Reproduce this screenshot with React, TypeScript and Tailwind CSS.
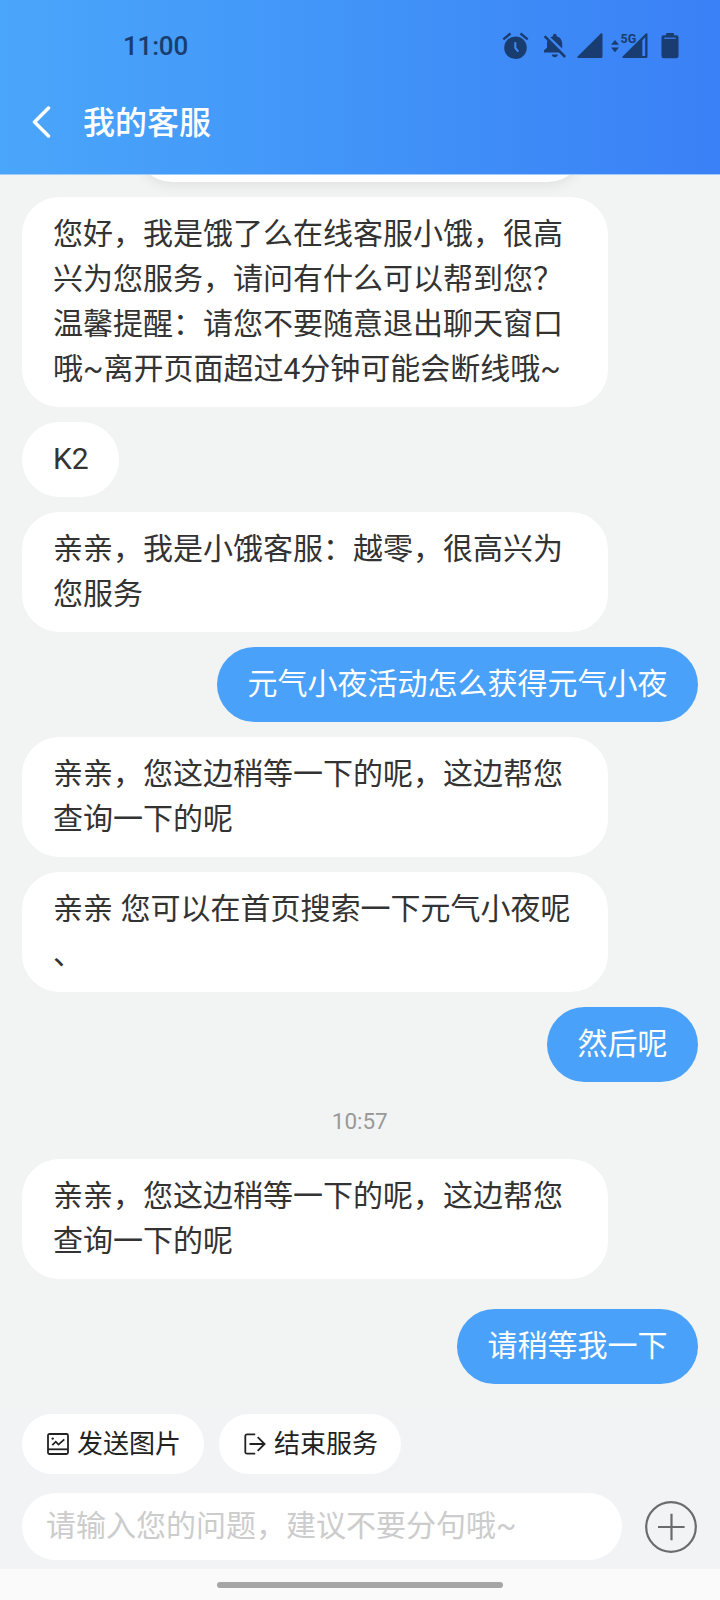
import { clsx } from 'clsx'

type Message = {
  id: number
  from: 'agent' | 'user' | 'time'
  text: string
  spaced?: boolean
}

const MESSAGES: Message[] = [
  {
    id: 1,
    from: 'agent',
    text: '您好，我是饿了么在线客服小饿，很高兴为您服务，请问有什么可以帮到您？\n温馨提醒：请您不要随意退出聊天窗口哦~离开页面超过4分钟可能会断线哦~',
  },
  { id: 2, from: 'agent', text: 'K2' },
  { id: 3, from: 'agent', text: '亲亲，我是小饿客服：越零，很高兴为您服务' },
  { id: 4, from: 'user', text: '元气小夜活动怎么获得元气小夜' },
  { id: 5, from: 'agent', text: '亲亲，您这边稍等一下的呢，这边帮您查询一下的呢' },
  { id: 6, from: 'agent', text: '亲亲 您可以在首页搜索一下元气小夜呢、' },
  { id: 7, from: 'user', text: '然后呢' },
  { id: 8, from: 'time', text: '10:57' },
  { id: 9, from: 'agent', text: '亲亲，您这边稍等一下的呢，这边帮您查询一下的呢' },
  { id: 10, from: 'user', text: '请稍等我一下', spaced: true },
]

function AlarmIcon() {
  return (
    <svg width="27" height="28" viewBox="0 0 27 28" fill="none">
      <circle cx="13.5" cy="15.7" r="11.3" fill="currentColor" />
      <path d="M1.300 7.400 8.500 1.500M25.700 7.400l-7.200-5.900" stroke="currentColor" strokeWidth="2.4" />
      <path d="M13.300 10.300v5.700l3 3.600" stroke="#3f8bf7" strokeWidth="2" />
    </svg>
  )
}

function BellOffIcon() {
  return (
    <svg width="24" height="26" viewBox="0 0 24 26" fill="none">
      <path
        d="M7.400 4.300c.7-.5 1.600-.8 2.600-1V2.600a1.800 1.800 0 0 1 3.600 0v.7c3.500.8 5.600 3.800 5.600 7.500v4.700z"
        fill="currentColor"
      />
      <path d="M4.500 7.600 17 19.500H1v-2.200l3-2.600v-3.900c0-1.200.1-2.200.5-3.200z" fill="currentColor" />
      <path d="M8.700 21.500h6.200c-.3 1.700-1.500 2.800-3.100 2.800s-2.800-1.100-3.100-2.800z" fill="currentColor" />
      <path d="M1.600 3.200 22.200 24" stroke="currentColor" strokeWidth="2.500" />
    </svg>
  )
}

function SignalIcon() {
  return (
    <svg width="26" height="26" viewBox="0 0 26 26">
      <path
        d="M25.500 1.200v22.300a1.500 1.500 0 0 1-1.500 1.500H1.200C.2 25 0 24.200.6 23.500L23.800.6c.8-.8 1.700-.5 1.700.6z"
        fill="currentColor"
      />
    </svg>
  )
}

function NetworkIcon() {
  return (
    <svg width="38" height="26" viewBox="0 0 38 26" className="overflow-visible">
      <path d="M1 11.800 5 7l4 4.800zM1 14.400h8L5 19.200z" fill="currentColor" />
      <path
        d="M37.500 1.200v22.300a1.500 1.500 0 0 1-1.500 1.500H13.200c-1 0-1.200-.8-.6-1.500L35.800.6c.8-.8 1.700-.5 1.700.6zM32.300 7.200v15.700h2.900V4.300z"
        fill="currentColor"
        fillRule="evenodd"
      />
      <text x="10.600" y="10.200" fontSize="12.500" fontWeight="700" fontFamily="Roboto, sans-serif" fill="currentColor">
        5G
      </text>
    </svg>
  )
}

function BatteryIcon() {
  return (
    <svg width="18" height="26" viewBox="0 0 18 26" fill="none">
      <path
        d="M6 0h6a1 1 0 0 1 1 1v1.300h2.500a2 2 0 0 1 2 2V23a2.300 2.300 0 0 1-2.300 2.300H2.800A2.300 2.300 0 0 1 .5 23V4.300a2 2 0 0 1 2-2H5V1a1 1 0 0 1 1-1z"
        fill="currentColor"
      />
      <path d="M3.200 5.200h11.600" stroke="#3c84f6" strokeWidth="1.200" />
    </svg>
  )
}

function PictureIcon() {
  return (
    <svg width="22" height="22" viewBox="0 0 22 22" fill="none" stroke="currentColor" strokeWidth="1.800">
      <rect x="1" y="1" width="20" height="20" rx="1.500" />
      <path d="M1 16.300h20" />
      <path d="m5.300 12.200 3.500-3.500 2.700 2.900 5.800-5.200" />
      <circle cx="5.700" cy="5.600" r="1.200" fill="currentColor" stroke="none" />
    </svg>
  )
}

function ExitIcon() {
  return (
    <svg width="22" height="22" viewBox="0 0 22 22" fill="none" stroke="currentColor" strokeWidth="1.800">
      <path d="M11.200 1.300H3A1.700 1.700 0 0 0 1.300 3v16A1.700 1.700 0 0 0 3 20.700h8.200" />
      <path d="M5.500 11h15.100M13.700 4.100l6.900 6.900-6.900 6.900" />
    </svg>
  )
}

function Header() {
  return (
    <header className="h-[175px] border-b border-[#a3cbf8] bg-linear-to-r from-[#4aa6fa] to-[#3a80f6]">
      <div className="flex h-[91px] items-center justify-between pl-[123px] pr-[41px] text-[#193d70]">
        <span className="text-[26px] font-medium leading-none tracking-[-0.2px]">11:00</span>
        <div className="flex items-center">
          <AlarmIcon />
          <span className="ml-[14px]"><BellOffIcon /></span>
          <span className="ml-[10px]"><SignalIcon /></span>
          <span className="ml-[7px]"><NetworkIcon /></span>
          <span className="ml-[13px]"><BatteryIcon /></span>
        </div>
      </div>
      <div className="flex h-[62px] items-center pl-8 text-white">
        <svg width="19" height="32" viewBox="0 0 19 32" fill="none" stroke="currentColor" strokeWidth="3.500">
          <path d="M16.500 2 2.500 16l14 14" strokeLinecap="round" strokeLinejoin="round" />
        </svg>
        <h1 className="ml-8 pt-[2px] text-[32px] font-medium leading-none">我的客服</h1>
      </div>
    </header>
  )
}

function Bubble({ message }: { message: Message }) {
  if (message.from === 'time') {
    return <p className="mt-2 mb-1.5 text-center text-[22.5px] leading-[33px] text-[#999]">{message.text}</p>
  }

  return (
    <div
      className={clsx(
        'max-w-[586px] whitespace-pre-line break-all rounded-[37.5px] pt-[14px] pr-[30px] pb-4 pl-[31px] text-[30px] leading-[45px] [line-break:anywhere]',
        message.from === 'user' ? 'self-end bg-[#4aa1f9] text-white' : 'self-start bg-white text-[#333]',
        message.spaced && 'mt-[15px]',
      )}
    >
      {message.text}
    </div>
  )
}

export default function App() {
  return (
    <div
      lang="zh-CN"
      className="flex h-[1600px] w-[720px] flex-col overflow-hidden bg-[#f2f4f4] font-[Roboto,'Noto_Sans_CJK_SC',sans-serif]"
    >
      <Header />

      {/* Messages */}
      <main className="flex h-[1232px] flex-col gap-[15px] overflow-hidden pr-[22.5px] pl-[22px]">
        <div className="-mt-[68px] h-[75px] w-[450px] shrink-0 self-center rounded-[37.5px] bg-white shadow-[0_4px_12px_rgba(0,0,0,0.07)]" />
        {MESSAGES.map((message) => (
          <Bubble key={message.id} message={message} />
        ))}
      </main>

      {/* Composer */}
      <footer className="h-[162px] bg-[#f1f3f5] pt-[7px] pr-[23px] pl-[22px]">
        <div className="flex gap-[15px]">
          <button className="flex h-[60px] w-[182px] items-center gap-2 rounded-full bg-white pl-[25px] text-[26px] text-[#222]">
            <PictureIcon />
            发送图片
          </button>
          <button className="flex h-[60px] w-[182px] items-center gap-2 rounded-full bg-white pl-[25px] text-[26px] text-[#222]">
            <ExitIcon />
            结束服务
          </button>
        </div>
        <div className="mt-[19px] flex items-center justify-between">
          <div className="flex h-[67px] w-[600px] items-center rounded-full bg-white pb-[2px] pl-6 text-[30px] leading-[45px] text-[#ccc]">
            请输入您的问题，建议不要分句哦~
          </div>
          <svg width="52" height="52" viewBox="0 0 52 52" fill="none" stroke="#6b6b6b" strokeWidth="2.200">
            <circle cx="26" cy="26" r="24.800" />
            <path d="M26.500 12.700v26.600M13 26h26.600" />
          </svg>
        </div>
      </footer>

      <div className="flex h-[31px] justify-center bg-[#fafafa] pt-[13px]">
        <div className="h-[6px] w-[286px] rounded-full bg-[#a6a6a6]" />
      </div>
    </div>
  )
}
